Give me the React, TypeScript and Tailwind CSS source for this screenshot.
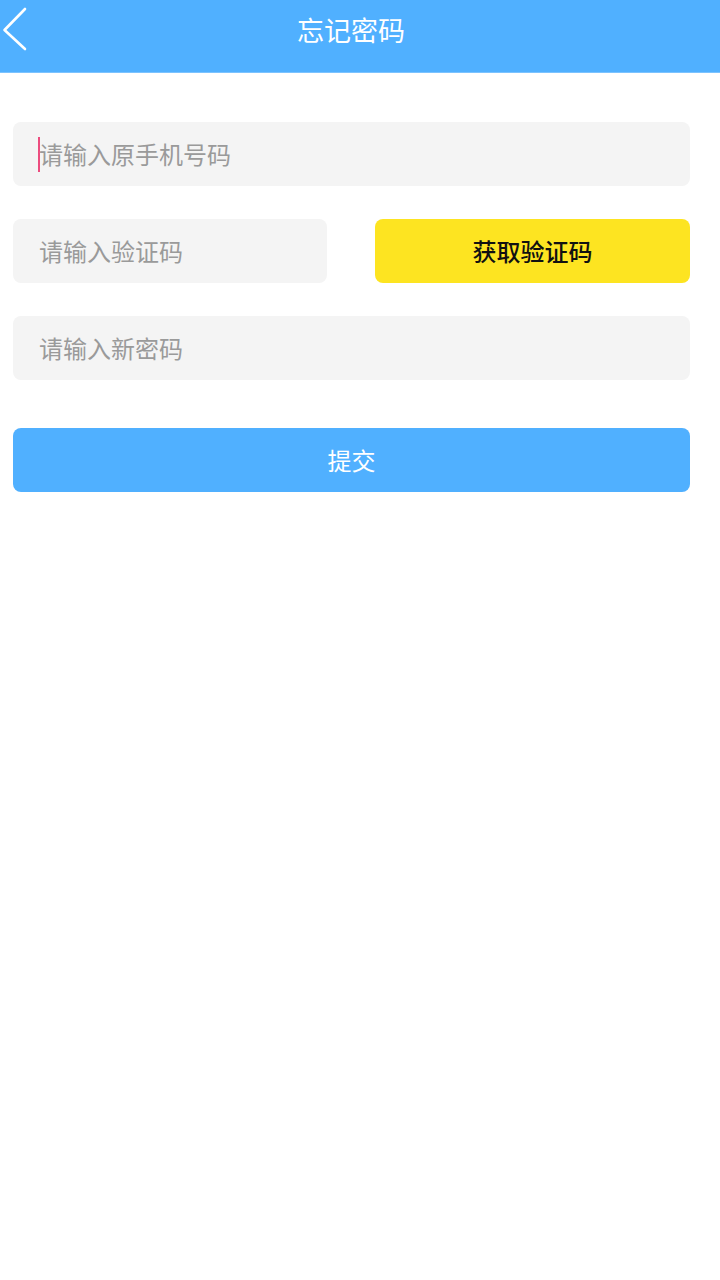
import React from "react";

export default function App() {
  const font = { fontFamily: '"Noto Sans CJK SC", "Noto Sans", sans-serif' };
  return (
    <div className="w-[720px] h-[1280px] bg-white" style={font}>
      <div className="relative h-[73px] bg-[#50b0ff] border-b border-[#7cc3ff] flex items-start justify-center pt-[15px] pr-[18px]">
        <svg className="absolute left-0 top-[4px]" width="32" height="48" viewBox="0 0 32 48">
          <path d="M25 5 L4.5 26 L25 45" fill="none" stroke="white" strokeWidth="2.6" strokeLinecap="round" strokeLinejoin="round" />
        </svg>
        <span className="text-white text-[27px] leading-[30px]">忘记密码</span>
      </div>
      <div className="flex flex-col px-[13px] pr-[30px] pt-[49px]">
        <div className="h-[64px] rounded-[8px] bg-[#f4f4f4] flex items-center pl-[25px]">
          <span className="w-[2px] h-[35px] bg-[#ec4c7e] mr-[-1px]" />
          <span className="text-[24px] text-[#9a9a9a] leading-none">请输入原手机号码</span>
        </div>
        <div className="mt-[33px] flex gap-[48px]">
          <div className="w-[314px] h-[64px] rounded-[8px] bg-[#f4f4f4] flex items-center pl-[26px]">
            <span className="text-[24px] text-[#9a9a9a] leading-none">请输入验证码</span>
          </div>
          <div className="flex-1 h-[64px] rounded-[8px] bg-[#fde421] flex items-center justify-center">
            <span className="text-[24px] text-[#111] font-medium leading-none">获取验证码</span>
          </div>
        </div>
        <div className="mt-[33px] h-[64px] rounded-[8px] bg-[#f4f4f4] flex items-center pl-[26px]">
          <span className="text-[24px] text-[#9a9a9a] leading-none">请输入新密码</span>
        </div>
        <div className="mt-[48px] h-[64px] rounded-[8px] bg-[#50b0ff] flex items-center justify-center">
          <span className="text-[24px] text-white leading-none">提交</span>
        </div>
      </div>
    </div>
  );
}
